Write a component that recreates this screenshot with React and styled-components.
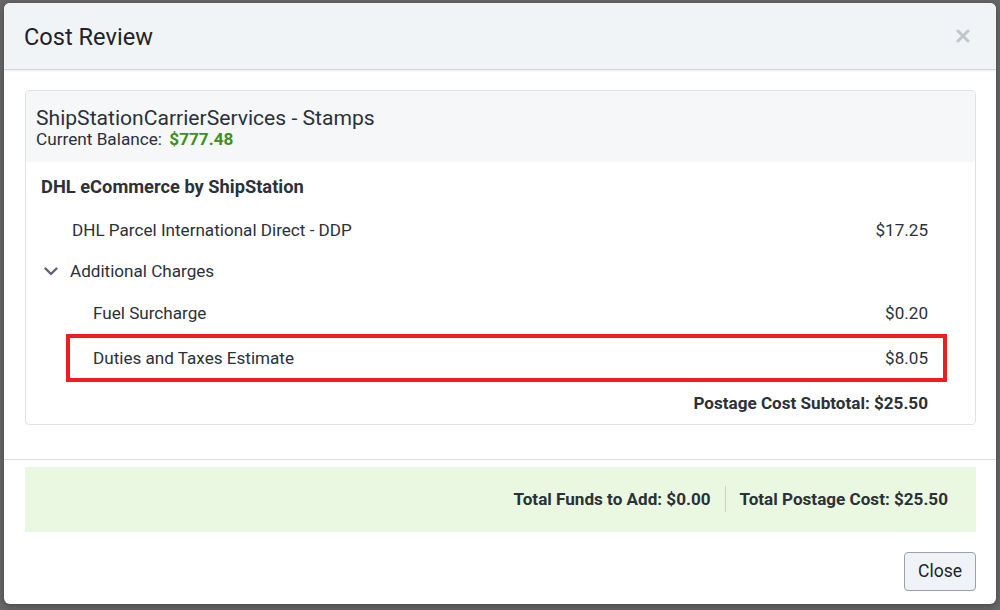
import React from 'react';
import styled, { createGlobalStyle } from 'styled-components';

const GlobalStyle = createGlobalStyle`
  html, body {
    margin: 0;
    padding: 0;
    background: #676767;
    font-family: Roboto, "Liberation Sans", Arial, sans-serif;
    color: #2b3139;
  }
  * { box-sizing: border-box; }
`;

const Backdrop = styled.div`
  width: 1000px;
  height: 610px;
  padding: 3px 4px 6px 4px;
  background: #676767;
`;

const Modal = styled.div`
  width: 992px;
  height: 601px;
  background: #ffffff;
  border-radius: 6px;
  overflow: hidden;
  display: flex;
  flex-direction: column;
  box-shadow: 0 2px 8px rgba(0, 0, 0, 0.3);
`;

const Header = styled.div`
  height: 67px;
  flex: none;
  display: flex;
  align-items: center;
  justify-content: space-between;
  padding: 2px 24px 0 20px;
  background: #f1f4f7;
  border-bottom: 1px solid #d3d8dd;
  box-shadow: 0 1px 2px rgba(0, 0, 0, 0.08);
  h2 {
    margin: 0;
    font-size: 23.6px;
    font-weight: 400;
    color: #1f2329;
  }
`;

const CloseX = styled.button`
  border: none;
  background: none;
  padding: 0;
  width: 16px;
  height: 16px;
  cursor: pointer;
  display: flex;
  svg { display: block; }
`;

const Body = styled.div`
  padding: 20px 20px 34px 21px;
  border-bottom: 1px solid #dde1e6;
`;

const Card = styled.div`
  border: 1px solid #dfe3e8;
  border-radius: 4px;
  overflow: hidden;
`;

const CardHeader = styled.div`
  background: #f5f7f9;
  height: 71px;
  padding: 14px 10px 0;
  .account {
    font-size: 21.1px;
    line-height: 25px;
    color: #2b3139;
  }
  .balance {
    font-size: 17.2px;
    line-height: 19px;
    color: #2b3139;
  }
  .balance b {
    color: #3f8f1c;
    margin-left: 3px;
  }
`;

const CardContent = styled.div`
  padding: 14px 28px 0 14px;
`;

const Carrier = styled.div`
  font-size: 18.3px;
  font-weight: 700;
  line-height: 22px;
  padding-left: 1px;
  margin-bottom: 11px;
  color: #2b3139;
`;

const Row = styled.div`
  height: ${p => (p.$highlight ? 48 : 41.5)}px;
  display: flex;
  align-items: center;
  justify-content: space-between;
  font-size: 17.1px;
  color: #2b3139;
  padding: 0 ${p => (p.$highlight ? 15 : 19)}px 0 ${p => p.$indent}px;
  margin-left: ${p => (p.$highlight ? 26 : 0)}px;
  border: ${p => (p.$highlight ? '4px solid #f01c1f' : 'none')};
  .label {
    display: flex;
    align-items: center;
    gap: 12px;
  }
`;

const Subtotal = styled.div`
  height: 42px;
  display: flex;
  align-items: center;
  justify-content: flex-end;
  padding-right: 19px;
  font-size: 17.1px;
  font-weight: 700;
`;

const Footer = styled.div`
  padding: 7px 20px 0 21px;
  display: flex;
  flex-direction: column;
  align-items: stretch;
`;

const Totals = styled.div`
  height: 65px;
  background: #ebf8e1;
  display: flex;
  align-items: center;
  justify-content: flex-end;
  padding-right: 28px;
  font-size: 17.1px;
  font-weight: 700;
  color: #2b3139;
`;

const Divider = styled.span`
  width: 1px;
  height: 26px;
  background: #c9d1c3;
  margin: 0 14px;
`;

const Button = styled.button`
  align-self: flex-end;
  margin-top: 20px;
  height: 39px;
  width: 72px;
  padding: 0;
  font-family: Roboto, "Liberation Sans", Arial, sans-serif;
  font-size: 17.5px;
  color: #1f2329;
  background: #eff3f7;
  border: 1px solid #99a2ac;
  border-radius: 4px;
  cursor: pointer;
`;

const Chevron = () => (
  <svg width="14" height="9" viewBox="0 0 14 9">
    <path d="M1.5 1.5 L7 7 L12.5 1.5" fill="none" stroke="#5b6572" strokeWidth="2.4" strokeLinecap="round" strokeLinejoin="round" />
  </svg>
);

const charges = [
  { label: 'Fuel Surcharge', amount: '$0.20' },
  { label: 'Duties and Taxes Estimate', amount: '$8.05', highlight: true },
];

export default function App() {
  return (
    <>
      <GlobalStyle />
      <Backdrop>
        <Modal>
          <Header>
            <h2>Cost Review</h2>
            <CloseX aria-label="Close">
              <svg width="14" height="14" viewBox="0 0 14 14">
                <path d="M2 2 L12 12 M12 2 L2 12" stroke="#c1c6cd" strokeWidth="3" strokeLinecap="round" />
              </svg>
            </CloseX>
          </Header>
          <Body>
            <Card>
              <CardHeader>
                <div className="account">ShipStationCarrierServices - Stamps</div>
                <div className="balance">
                  Current Balance: <b>$777.48</b>
                </div>
              </CardHeader>
              <CardContent>
                <Carrier>DHL eCommerce by ShipStation</Carrier>
                <Row $indent={32}>
                  <span>DHL Parcel International Direct - DDP</span>
                  <span>$17.25</span>
                </Row>
                <Row $indent={4}>
                  <span className="label">
                    <Chevron />
                    Additional Charges
                  </span>
                </Row>
                {charges.map(c => (
                  <Row key={c.label} $indent={c.highlight ? 23 : 53} $highlight={c.highlight}>
                    <span>{c.label}</span>
                    <span>{c.amount}</span>
                  </Row>
                ))}
                <Subtotal>Postage Cost Subtotal: $25.50</Subtotal>
              </CardContent>
            </Card>
          </Body>
          <Footer>
            <Totals>
              <span>Total Funds to Add: $0.00</span>
              <Divider />
              <span>Total Postage Cost: $25.50</span>
            </Totals>
            <Button>Close</Button>
          </Footer>
        </Modal>
      </Backdrop>
    </>
  );
}
